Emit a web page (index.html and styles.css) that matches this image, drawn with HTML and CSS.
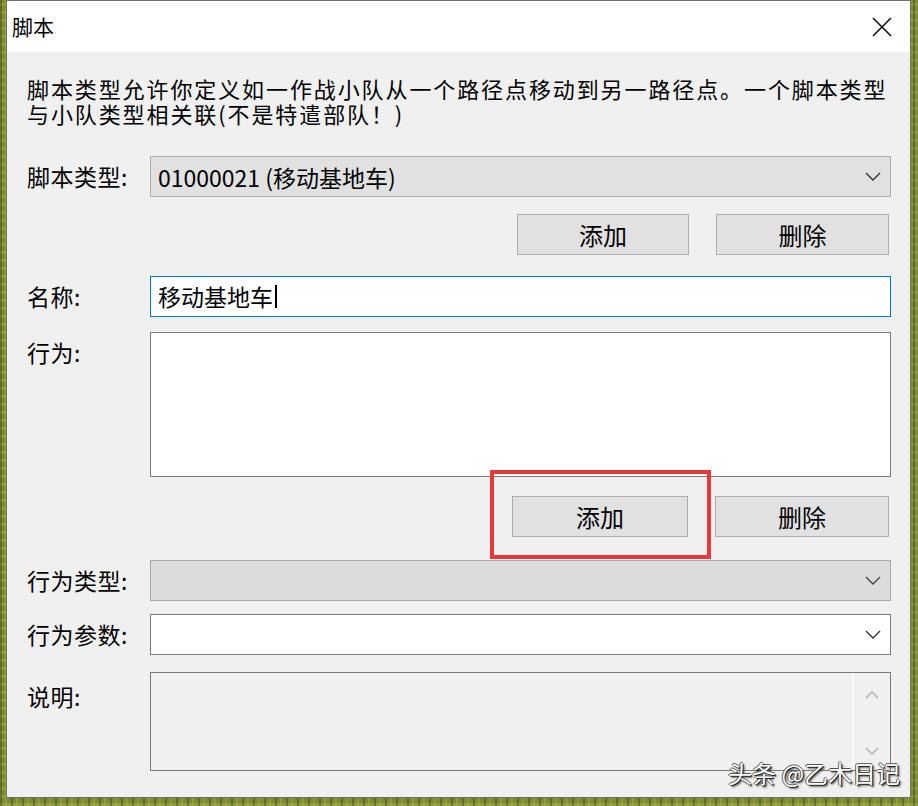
FILE: index.html
```html
<!DOCTYPE html>
<html lang="zh-CN">
<head>
    <meta charset="UTF-8">
    <title>脚本</title>
    <link rel="stylesheet" href="styles.css">
</head>
<body>

<div class="dialog">
    <div class="titlebar">
        <span class="title">脚本</span>
        <svg class="close" width="20" height="20" viewBox="0 0 20 20">
            <path d="M1 1 L19 19 M19 1 L1 19" stroke="#111" stroke-width="1.6" fill="none"/>
        </svg>
    </div>

    <div class="content">
        <p class="intro">脚本类型允许你定义如一作战小队从一个路径点移动到另一路径点。一个脚本类型<br>与小队类型相关联(不是特遣部队！)</p>

        <div class="row row-script">
            <label>脚本类型:</label>
            <div class="combo">
                <span>01000021 (移动基地车)</span>
                <svg class="chevron" width="16" height="9" viewBox="0 0 16 9"><polyline points="1,1 8,8 15,1" fill="none" stroke="#333" stroke-width="1.4"/></svg>
            </div>
        </div>

        <div class="btn-row btn-row-top">
            <button class="btn btn-a">添加</button>
            <button class="btn btn-b">删除</button>
        </div>

        <div class="row row-name">
            <label>名称:</label>
            <div class="textbox">移动基地车<span class="caret"></span></div>
        </div>

        <div class="row row-actions">
            <label>行为:</label>
            <div class="listbox"></div>
        </div>

        <div class="btn-row btn-row-mid">
            <div class="highlight-wrap">
                <button class="btn btn-c">添加</button>
                <div class="highlight"></div>
            </div>
            <button class="btn btn-d">删除</button>
        </div>

        <div class="row row-type">
            <label>行为类型:</label>
            <div class="combo combo-disabled">
                <span></span>
                <svg class="chevron" width="16" height="9" viewBox="0 0 16 9"><polyline points="1,1 8,8 15,1" fill="none" stroke="#444" stroke-width="1.4"/></svg>
            </div>
        </div>

        <div class="row row-param">
            <label>行为参数:</label>
            <div class="combo combo-white">
                <span></span>
                <svg class="chevron" width="16" height="9" viewBox="0 0 16 9"><polyline points="1,1 8,8 15,1" fill="none" stroke="#333" stroke-width="1.4"/></svg>
            </div>
        </div>

        <div class="row row-desc">
            <label>说明:</label>
            <div class="memo">
                <div class="memo-text"></div>
                <div class="scrollbar">
                    <svg width="14" height="9" viewBox="0 0 14 9"><polyline points="1,8 7,2 13,8" fill="none" stroke="#c2c2c2" stroke-width="2"/></svg>
                    <svg width="14" height="9" viewBox="0 0 14 9"><polyline points="1,1 7,7 13,1" fill="none" stroke="#c2c2c2" stroke-width="2"/></svg>
                </div>
            </div>
        </div>
    </div>
</div>

<div class="watermark">头条 @乙木日记</div>

</body>
</html>
```

FILE: styles.css
```css
html, body {
    margin: 0;
    padding: 0;
    height: 806px;
    overflow: hidden;
}
body {
    position: relative;
    font-family: "Noto Sans CJK SC", "Noto Sans", sans-serif;
    color: #000;
    background-color: #7d8a34;
    background-image:
        repeating-linear-gradient(90deg, rgba(40, 50, 10, 0.35) 0 2px, transparent 2px 5px, rgba(200, 200, 80, 0.25) 5px 7px, transparent 7px 11px),
        repeating-linear-gradient(0deg, rgba(230, 220, 90, 0.2) 0 3px, transparent 3px 8px);
    padding: 0 7px 8px 6px;
    box-sizing: border-box;
}
.dialog {
    width: 905px;
    height: 798px;
    box-sizing: border-box;
    border: 1px solid #707070;
    background: #f0f0f0;
    display: flex;
    flex-direction: column;
}
.titlebar {
    height: 51px;
    background: #fff;
    display: flex;
    align-items: center;
    justify-content: space-between;
    padding: 0 18px 0 5px;
}
.title {
    font-size: 21px;
    line-height: 1;
}
.close {
    display: block;
}
.content {
    padding: 24px 19px 0 20px;
}
.intro {
    margin: 0;
    font-size: 22px;
    line-height: 24.5px;
    letter-spacing: 1.9px;
    white-space: nowrap;
}
.row {
    display: grid;
    grid-template-columns: 123px 1fr;
    align-items: start;
}
.row label {
    font-size: 23px;
    line-height: 41px;
    letter-spacing: 0.5px;
}
.row-script { margin-top: 31px; }
.btn-row-top { margin-top: 17px; }
.row-name { margin-top: 21px; }
.row-actions { margin-top: 15px; }
.btn-row-mid { margin-top: 19px; }
.row-type { margin-top: 23px; }
.row-param { margin-top: 13px; }
.row-desc { margin-top: 17px; }
.row-desc label { padding-top: 4px; }

.combo {
    height: 41px;
    box-sizing: border-box;
    border: 1px solid #adadad;
    background: #e1e1e1;
    display: flex;
    align-items: center;
    justify-content: space-between;
    padding: 0 9px 0 7px;
    font-size: 23px;
}
.combo-disabled {
    background: #dcdcdc;
    border-color: #a8a8a8;
}
.combo-white {
    background: #fff;
    border-color: #7a7a7a;
}
.chevron {
    display: block;
}
.textbox {
    height: 41px;
    box-sizing: border-box;
    border: 1px solid #0078d7;
    background: #fff;
    padding: 0 7px;
    font-size: 23px;
    line-height: 39px;
    display: flex;
    align-items: center;
}
.caret {
    display: inline-block;
    width: 2px;
    height: 23px;
    background: #000;
    margin-left: 2px;
}
.listbox {
    height: 145px;
    box-sizing: border-box;
    border: 1px solid #7a7a7a;
    background: #fff;
}
.btn-row {
    display: flex;
    justify-content: flex-end;
    gap: 27px;
    padding-right: 2px;
}
.btn {
    height: 41px;
    box-sizing: border-box;
    border: 1px solid #adadad;
    background: #e1e1e1;
    font-family: inherit;
    font-size: 24px;
    color: #000;
    padding: 0;
}
.btn-a { width: 172px; }
.btn-b { width: 173px; }
.btn-c { width: 176px; }
.btn-d { width: 174px; }
.highlight-wrap {
    position: relative;
}
.highlight-wrap .btn {
    display: block;
}
.highlight {
    position: absolute;
    left: -22px;
    top: -26px;
    width: 221px;
    height: 89px;
    box-sizing: border-box;
    border: 4px solid #e8383a;
}
.memo {
    height: 99px;
    box-sizing: border-box;
    border: 1px solid #7a7a7a;
    background: #f0f0f0;
    display: flex;
}
.memo-text {
    flex: 1;
}
.scrollbar {
    width: 36px;
    border-left: 2px solid #fbfbfb;
    display: flex;
    flex-direction: column;
    align-items: center;
    justify-content: space-between;
    padding: 17px 0 14px;
}
.scrollbar svg {
    display: block;
}
.watermark {
    position: absolute;
    left: 728px;
    top: 755px;
    font-size: 24px;
    color: #fff;
    text-shadow: 1px 1px 0 #222, -1px 0 0 #555, 0 -1px 0 #555, 2px 2px 2px rgba(0, 0, 0, 0.6);
}
```
